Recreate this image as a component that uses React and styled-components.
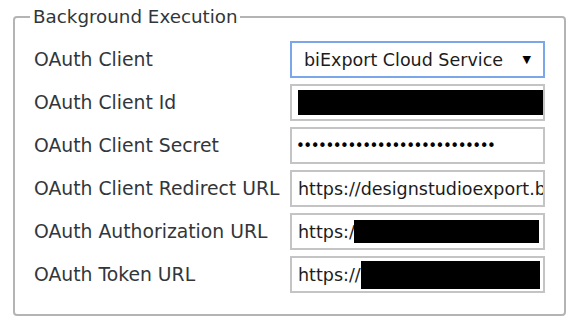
import React from "react";
import styled, { createGlobalStyle } from "styled-components";

const GlobalStyle = createGlobalStyle`
  body {
    margin: 0;
    background: #fff;
    font-family: "DejaVu Sans", "Noto Sans", sans-serif;
  }
`;

const Page = styled.div`
  width: 576px;
  height: 326px;
  padding: 5px 10px 0 13px;
  box-sizing: border-box;
`;

const Fieldset = styled.fieldset`
  margin: 0;
  width: 553px;
  height: 311px;
  box-sizing: border-box;
  border: 2px solid #b4b4b4;
  border-radius: 4px;
  padding: 12px 19px 0 19px;
`;

const Legend = styled.legend`
  margin-left: -4px;
  padding: 0 2px 0 3px;
  font-size: 18.3px;
  line-height: 24px;
  color: #32363a;
`;

const Grid = styled.div`
  display: grid;
  grid-template-columns: 256px 255px;
  grid-auto-rows: 37px;
  row-gap: 6px;
  align-items: center;
`;

const Label = styled.div`
  font-size: 18.8px;
  color: #32363a;
  white-space: nowrap;
`;

const Field = styled.div`
  height: 37px;
  box-sizing: border-box;
  border: 2px solid ${(p) => (p.$focus ? "#7aa7ea" : "#c4c4c4")};
  display: flex;
  align-items: center;
  padding: 0 ${(p) => (p.$focus ? "12px" : "6px")} 0 ${(p) => (p.$focus ? "12px" : "6px")};
  font-size: 17.5px;
  color: #1c1c1c;
  white-space: nowrap;
  overflow: hidden;
`;

const Value = styled.span`
  flex: ${(p) => (p.$grow ? 1 : "none")};
`;

const Arrow = styled.span`
  font-size: 11px;
  color: #000;
`;

const Dots = styled.span`
  font-size: 15px;
  letter-spacing: -1.5px;
  color: #000;
  margin-left: -2px;
`;

const Redact = styled.span`
  display: block;
  background: #000;
  height: ${(p) => p.$h}px;
  flex: 1;
  margin-left: ${(p) => p.$ml || 0}px;
  margin-right: ${(p) => p.$mr}px;
`;

export default function App() {
  return (
    <Page>
      <GlobalStyle />
      <Fieldset>
        <Legend>Background Execution</Legend>
        <Grid>
          <Label>OAuth Client</Label>
          <Field $focus>
            <Value $grow>biExport Cloud Service</Value>
            <Arrow>▼</Arrow>
          </Field>

          <Label>OAuth Client Id</Label>
          <Field>
            <Redact $h={25} $mr={-8} />
          </Field>

          <Label>OAuth Client Secret</Label>
          <Field>
            <Dots>{"•".repeat(27)}</Dots>
          </Field>

          <Label>OAuth Client Redirect URL</Label>
          <Field>
            <Value>https://designstudioexport.biexport.com</Value>
          </Field>

          <Label>OAuth Authorization URL</Label>
          <Field>
            <Value>https:/</Value>
            <Redact $h={23} $mr={-2} $ml={-1} />
          </Field>

          <Label>OAuth Token URL</Label>
          <Field>
            <Value>https://</Value>
            <Redact $h={28} $mr={-3} />
          </Field>
        </Grid>
      </Fieldset>
    </Page>
  );
}
